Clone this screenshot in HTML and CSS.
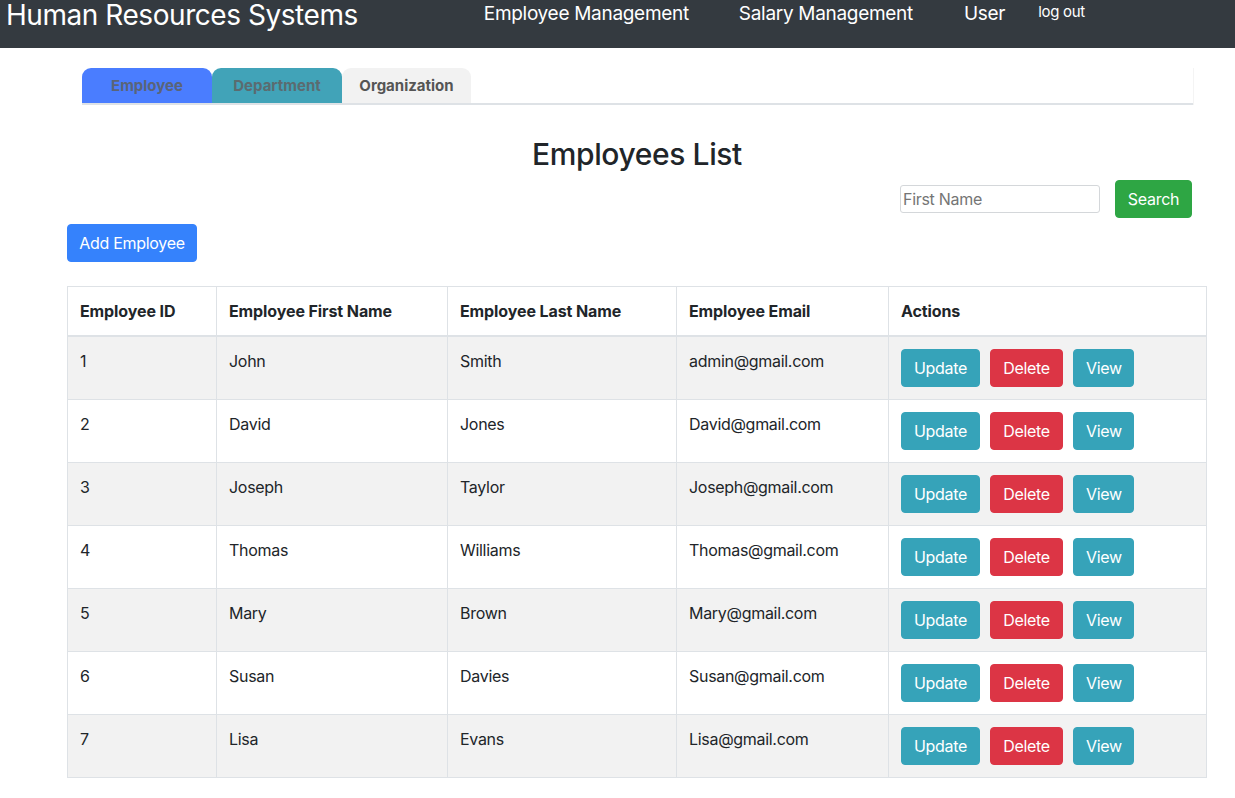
FILE: index.html
```html
<!DOCTYPE html>
<html>
<head>
<meta charset="utf-8">
<link rel="stylesheet" href="styles.css">
</head>
<body>
<header class="navbar">
  <div class="brand">Human Resources Systems</div>
  <nav class="nav">
    <a class="nav-link nl-emp">Employee Management</a>
    <a class="nav-link nl-sal">Salary Management</a>
    <a class="nav-link nl-user">User</a>
    <a class="nav-link logout">log out</a>
  </nav>
</header>
<main class="container">
  <div class="tabs">
    <div class="tab tab-emp">Employee</div>
    <div class="tab tab-dep">Department</div>
    <div class="tab tab-org">Organization</div>
  </div>
  <h2 class="title">Employees List</h2>
  <div class="search-row">
    <input class="search-input" type="text" placeholder="First Name">
    <button class="btn btn-success">Search</button>
  </div>
  <div class="add-row">
    <button class="btn btn-primary">Add Employee</button>
  </div>
  <table class="table">
    <thead>
      <tr>
        <th class="c1">Employee ID</th>
        <th class="c2">Employee First Name</th>
        <th class="c3">Employee Last Name</th>
        <th class="c4">Employee Email</th>
        <th class="c5">Actions</th>
      </tr>
    </thead>
    <tbody>
      <tr><td>1</td><td>John</td><td>Smith</td><td>admin@gmail.com</td><td class="actions"><button class="btn btn-info">Update</button><button class="btn btn-danger">Delete</button><button class="btn btn-info">View</button></td></tr>
      <tr><td>2</td><td>David</td><td>Jones</td><td>David@gmail.com</td><td class="actions"><button class="btn btn-info">Update</button><button class="btn btn-danger">Delete</button><button class="btn btn-info">View</button></td></tr>
      <tr><td>3</td><td>Joseph</td><td>Taylor</td><td>Joseph@gmail.com</td><td class="actions"><button class="btn btn-info">Update</button><button class="btn btn-danger">Delete</button><button class="btn btn-info">View</button></td></tr>
      <tr><td>4</td><td>Thomas</td><td>Williams</td><td>Thomas@gmail.com</td><td class="actions"><button class="btn btn-info">Update</button><button class="btn btn-danger">Delete</button><button class="btn btn-info">View</button></td></tr>
      <tr><td>5</td><td>Mary</td><td>Brown</td><td>Mary@gmail.com</td><td class="actions"><button class="btn btn-info">Update</button><button class="btn btn-danger">Delete</button><button class="btn btn-info">View</button></td></tr>
      <tr><td>6</td><td>Susan</td><td>Davies</td><td>Susan@gmail.com</td><td class="actions"><button class="btn btn-info">Update</button><button class="btn btn-danger">Delete</button><button class="btn btn-info">View</button></td></tr>
      <tr><td>7</td><td>Lisa</td><td>Evans</td><td>Lisa@gmail.com</td><td class="actions"><button class="btn btn-info">Update</button><button class="btn btn-danger">Delete</button><button class="btn btn-info">View</button></td></tr>
    </tbody>
  </table>
</main>
</body>
</html>
```
FILE: styles.css
```css
* { box-sizing: border-box; }
html, body { margin: 0; padding: 0; }
body {
  font-family: Inter, "Noto Sans", "Liberation Sans", sans-serif;
  color: #212529;
  background: #fff;
  font-size: 16px;
  line-height: 24px;
  letter-spacing: -0.3px;
}
.navbar {
  height: 48px;
  background: #343a40;
  display: flex;
  align-items: flex-start;
  color: #fff;
}
.brand {
  font-size: 28px;
  line-height: 30px;
  padding-left: 6px;
  font-weight: 400;
  letter-spacing: -0.45px;
}
.nav {
  display: flex;
  align-items: flex-start;
  margin-left: 126px;
}
.nav-link {
  font-size: 19px;
  line-height: 28px;
  color: #fff;
  text-decoration: none;
  letter-spacing: -0.3px;
}
.nl-sal { margin-left: 50px; }
.nl-user { margin-left: 51px; }
.logout {
  font-size: 15px;
  line-height: 24px;
  margin-left: 33px;
}
.container {
  width: 1207px;
  padding-left: 67px;
}
.tabs {
  margin: 20px 14px 0 15px;
  display: flex;
  border-bottom: 2px solid #dee2e6;
  box-shadow: 1px 0 0 #f4f4f4;
}
.tab {
  width: 130px;
  height: 35px;
  border-radius: 9px 9px 0 0;
  font-weight: 700;
  font-size: 15px;
  line-height: 35px;
  text-align: center;
  color: #666;
  letter-spacing: 0;
}
.tab-emp { background: #4a7dff; color: #5a6478; }
.tab-dep { background: #41a3b8; color: #5b6b70; }
.tab-org { background: #f2f2f2; width: 129px; color: #555; }
.title {
  margin: 31px 0 0;
  font-size: 30px;
  line-height: 36px;
  font-weight: 500;
  text-align: center;
  color: #212529;
  letter-spacing: -0.4px;
}
.search-row {
  display: flex;
  justify-content: flex-end;
  align-items: center;
  padding-right: 15px;
  margin-top: 8px;
}
.search-input {
  width: 200px;
  height: 28px;
  border: 1px solid #d4d7da;
  border-radius: 3px;
  font-family: inherit;
  font-size: 16px;
  letter-spacing: -0.3px;
  padding: 0 2px;
  margin-right: 15px;
  color: #495057;
}
.search-input::placeholder { color: #757575; }
.btn {
  font-family: inherit;
  font-size: 16px;
  line-height: 24px;
  letter-spacing: -0.3px;
  padding: 6px 12px;
  border: 1px solid transparent;
  border-radius: 4px;
  color: #fff;
  cursor: pointer;
}
.btn-success { background: #2ea644; border-color: #2ea644; width: 77px; height: 38px; padding: 6px 0; }
.btn-primary { background: #3582fc; border-color: #3582fc; width: 130px; height: 38px; padding: 6px 0; }
.btn-info { background: #36a3b9; border-color: #36a3b9; }
.btn-danger { background: #dc3545; border-color: #dc3545; }
.add-row { margin-top: 6px; }
.table {
  margin-top: 24px;
  width: 1140px;
  border-collapse: collapse;
}
.table th, .table td {
  border: 1px solid #dee2e6;
  padding: 12px;
  text-align: left;
  vertical-align: top;
}
.table th { font-weight: 700; border-bottom-width: 2px; letter-spacing: -0.1px; }
.table thead tr th { height: 49px; }
.table tbody tr:nth-child(odd) { background: #f2f2f2; }
.table tbody td { height: 63px; }
.c1 { width: 149px; }
.c2 { width: 231px; }
.c3 { width: 229px; }
.c4 { width: 212px; }
.actions .btn { height: 38px; }
.actions .btn + .btn { margin-left: 10px; }
.actions .btn:nth-child(1) { width: 79px; }
.actions .btn:nth-child(2) { width: 73px; }
.actions .btn:nth-child(3) { width: 61px; }
```
